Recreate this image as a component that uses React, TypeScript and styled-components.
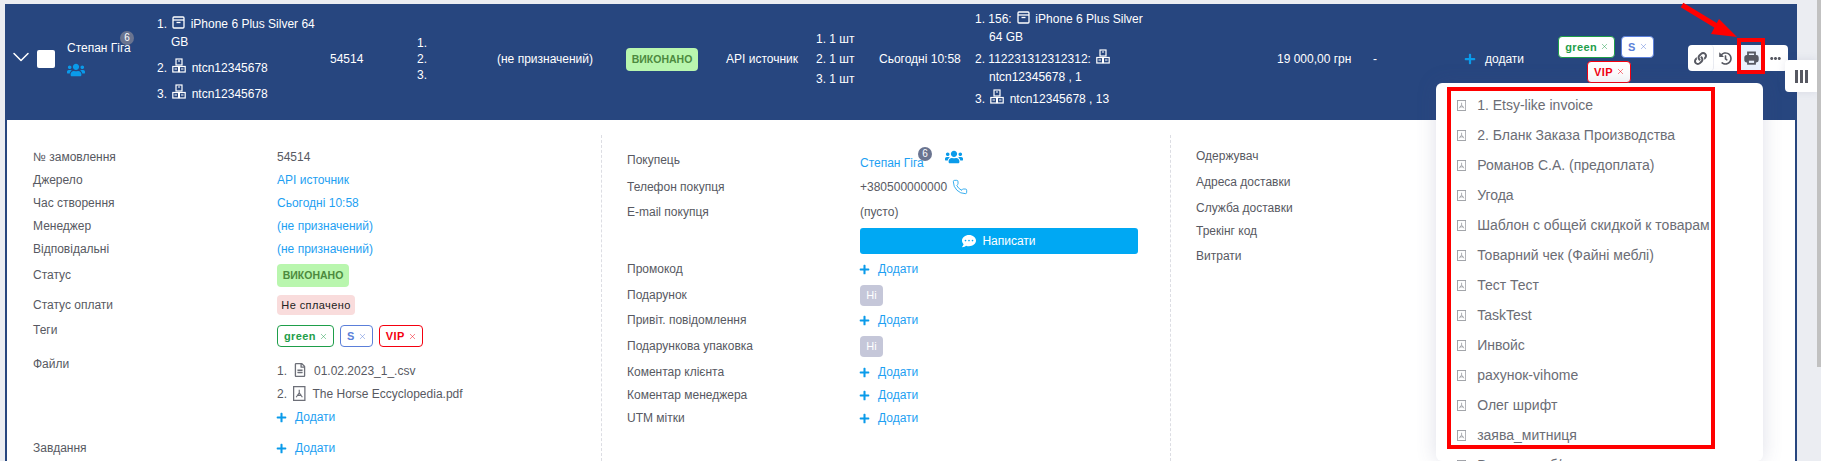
import styled, { createGlobalStyle } from 'styled-components';
import { ChevronDown, Phone, X } from 'lucide-react';
import { FaCommentDots, FaEllipsisH, FaHistory, FaLink, FaPlus, FaRegFileAlt, FaUsers } from 'react-icons/fa';

const GlobalStyle = createGlobalStyle`
  html, body {
    margin: 0;
    height: 461px;
    overflow: hidden;
    background: #ebedf2;
    font-family: 'Liberation Sans', Arial, sans-serif;
    font-size: 12px;
    color: #575962;
  }
  * { box-sizing: border-box; }
`;

const PdfIcon = ({ size = 11 }: { size?: number }) => (
  <svg width={(size * 10) / 12} height={size} viewBox="0 0 10 12" fill="none" stroke="currentColor">
    <rect x="0.5" y="0.5" width="9" height="11" strokeWidth="1" />
    <path d="M5 3 L5 5.5 L2.5 9 M5 5.5 L7.5 9 M3 7.5 H7" strokeWidth="0.9" />
  </svg>
);

const BoxIcon = () => (
  <svg width="13" height="13" viewBox="0 0 13 13" fill="none" stroke="currentColor" strokeWidth="1.3">
    <rect x="1" y="1" width="11" height="11" rx="1" />
    <path d="M1 4 H12" />
    <path d="M4.5 6.5 H8.5" />
  </svg>
);

const BoxesIcon = () => (
  <svg width="14" height="15" viewBox="0 0 14 15" fill="none" stroke="currentColor" strokeWidth="1.2">
    <rect x="4" y="1" width="6" height="6" />
    <rect x="0.8" y="8.5" width="5.8" height="5.5" />
    <rect x="7.4" y="8.5" width="5.8" height="5.5" />
    <path d="M6 3 H8 M2.5 11 H5 M9 11 H11.5" />
  </svg>
);

const PrintIcon = () => (
  <svg width="15" height="14" viewBox="0 0 15 14" fill="none" stroke="currentColor" strokeWidth="1.8">
    <path d="M4 5 V1.5 H11 V5" />
    <rect x="1.2" y="5" width="12.6" height="5.5" rx="1.5" fill="currentColor" />
    <rect x="4" y="8.8" width="7" height="4" fill="#ebf2fd" />
  </svg>
);

const Tag = ({ color, children }: { color: string; children: string }) => (
  <TagPill $color={color}>
    {children}
    <X size={9} strokeWidth={1.3} />
  </TagPill>
);

const AddLink = () => (
  <AddRow>
    <FaPlus size={11} />
    <span>Додати</span>
  </AddRow>
);

const printForms = [
  '1. Etsy-like invoice',
  '2. Бланк Заказа Производства',
  'Романов С.А. (предоплата)',
  'Угода',
  'Шаблон с общей скидкой к товарам',
  'Товарний чек (Файні меблі)',
  'Тест Тест',
  'TaskTest',
  'Инвойс',
  'рахунок-vihome',
  'Олег шрифт',
  'заява_митниця',
  'Видаткова б/н',
];

export default function App() {
  return (
    <>
      <GlobalStyle />
      <Page>
        <Card>
          <Header>
            <Cell $w={30}>
              <ChevronDown size={28} color="#fff" strokeWidth={1.3} />
            </Cell>
            <Cell $w={30}>
              <Checkbox />
            </Cell>
            <Cell $w={90}>
              <Customer>
                <CustomerName>
                  Степан Гіга
                  <CountBadge $top={-9} $left={53}>6</CountBadge>
                </CustomerName>
                <FaUsers size={18} color="#0a9bea" />
              </Customer>
            </Cell>
            <Cell $w={173}>
              <Numbered $gap={8}>
                <li>
                  1. <BoxIcon /> iPhone 6 Plus Silver 64
                  <Hanging>GB</Hanging>
                </li>
                <li>
                  2. <BoxesIcon /> ntcn12345678
                </li>
                <li>
                  3. <BoxesIcon /> ntcn12345678
                </li>
              </Numbered>
            </Cell>
            <Cell $w={87}>54514</Cell>
            <Cell $w={80}>
              <Numbered $gap={0}>
                <li>1.</li>
                <li>2.</li>
                <li>3.</li>
              </Numbered>
            </Cell>
            <Cell $w={129}>(не призначений)</Cell>
            <Cell $w={100}>
              <StatusBadge>ВИКОНАНО</StatusBadge>
            </Cell>
            <Cell $w={90}>API источник</Cell>
            <Cell $w={63}>
              <Numbered $gap={4}>
                <li>1. 1 шт</li>
                <li>2. 1 шт</li>
                <li>3. 1 шт</li>
              </Numbered>
            </Cell>
            <Cell $w={96}>Сьогодні 10:58</Cell>
            <Cell $w={302}>
              <Numbered $gap={4}>
                <li>
                  1. 156: <BoxIcon /> iPhone 6 Plus Silver
                  <Hanging>64 GB</Hanging>
                </li>
                <li>
                  2. 112231312312312: <BoxesIcon />
                  <Hanging>ntcn12345678 , 1</Hanging>
                </li>
                <li>
                  3. <BoxesIcon /> ntcn12345678 , 13
                </li>
              </Numbered>
            </Cell>
            <Cell $w={96}>19 000,00 грн</Cell>
            <Cell $w={91}>-</Cell>
            <Cell $w={95}>
              <HeaderAdd>
                <FaPlus size={12} color="#0a9bea" />
                <span>додати</span>
              </HeaderAdd>
            </Cell>
            <Cell $w={129}>
              <TagWrap>
                <Tag color="#1e9e4a">green</Tag>
                <Tag color="#5b7fd9">S</Tag>
                <Tag color="#f4000f">VIP</Tag>
              </TagWrap>
            </Cell>
            <Actions>
              <ActionButton>
                <FaLink size={13} />
              </ActionButton>
              <ActionButton>
                <FaHistory size={13} />
              </ActionButton>
              <ActionButton $active>
                <PrintIcon />
                <PrintMark />
              </ActionButton>
              <ActionButton $plain>
                <FaEllipsisH size={11} />
              </ActionButton>
            </Actions>
          </Header>

          <Details>
            <Column>
              <Row $h={23} $label={244}><Label>№ замовлення</Label><span>54514</span></Row>
              <Row $h={23} $label={244}><Label>Джерело</Label><Linked>API источник</Linked></Row>
              <Row $h={23} $label={244}><Label>Час створення</Label><Linked>Сьогодні 10:58</Linked></Row>
              <Row $h={23} $label={244}><Label>Менеджер</Label><Linked>(не призначений)</Linked></Row>
              <Row $h={23} $label={244}><Label>Відповідальні</Label><Linked>(не призначений)</Linked></Row>
              <Row $h={30} $label={244}><Label>Статус</Label><div><StatusBadge>ВИКОНАНО</StatusBadge></div></Row>
              <Row $h={30} $label={244}><Label>Статус оплати</Label><div><PaymentBadge>Не сплачено</PaymentBadge></div></Row>
              <Row $h={34} $label={244} $start>
                <Label>Теги</Label>
                <DetailTags>
                  <Tag color="#1e9e4a">green</Tag>
                  <Tag color="#5b7fd9">S</Tag>
                  <Tag color="#f4000f">VIP</Tag>
                </DetailTags>
              </Row>
              <Row $h={75} $label={244} $start>
                <Label>Файли</Label>
                <Files>
                  <FileLine><span>1.</span><FaRegFileAlt size={14} color="#6d6f78" /><span>01.02.2023_1_.csv</span></FileLine>
                  <FileLine><span>2.</span><PdfIcon size={15} /><span>The Horse Eccyclopedia.pdf</span></FileLine>
                  <AddLink />
                </Files>
              </Row>
              <Row $h={24} $label={244} $mt={7}><Label>Завдання</Label><AddLink /></Row>
            </Column>

            <Column $divided>
              <Row $h={29} $label={233}>
                <Label>Покупець</Label>
                <BuyerLine>
                  <BuyerName>
                    Степан Гіга
                    <CountBadge $top={-9} $left={58}>6</CountBadge>
                  </BuyerName>
                  <FaUsers size={18} color="#0a9bea" />
                </BuyerLine>
              </Row>
              <Row $h={26} $label={233}>
                <Label>Телефон покупця</Label>
                <PhoneLine>+380500000000 <Phone size={16} strokeWidth={1.2} color="#0a9bea" /></PhoneLine>
              </Row>
              <Row $h={24} $label={233}><Label>E-mail покупця</Label><span>(пусто)</span></Row>
              <Row $h={34} $label={233}>
                <span />
                <WriteButton><FaCommentDots size={14} />Написати</WriteButton>
              </Row>
              <Row $h={22} $label={233}><Label>Промокод</Label><AddLink /></Row>
              <Row $h={30} $label={233}><Label>Подарунок</Label><div><NoBadge>Ні</NoBadge></div></Row>
              <Row $h={20} $label={233}><Label>Привіт. повідомлення</Label><AddLink /></Row>
              <Row $h={32} $label={233}><Label>Подарункова упаковка</Label><div><NoBadge>Ні</NoBadge></div></Row>
              <Row $h={20} $label={233}><Label>Коментар клієнта</Label><AddLink /></Row>
              <Row $h={26} $label={233}><Label>Коментар менеджера</Label><AddLink /></Row>
              <Row $h={20} $label={233}><Label>UTM мітки</Label><AddLink /></Row>
            </Column>

            <Column $divided>
              <Row $h={22} $label={233}><Label>Одержувач</Label></Row>
              <Row $h={30} $label={233}><Label>Адреса доставки</Label></Row>
              <Row $h={22} $label={233}><Label>Служба доставки</Label></Row>
              <Row $h={24} $label={233}><Label>Трекінг код</Label></Row>
              <Row $h={26} $label={233}><Label>Витрати</Label></Row>
            </Column>
          </Details>

          <PrintMenu>
            {printForms.map((form) => (
              <MenuItem key={form}>
                <PdfIcon />
                <span>{form}</span>
              </MenuItem>
            ))}
            <MenuHighlight />
          </PrintMenu>
        </Card>

        <ColumnsButton>
          <i /><i /><i />
        </ColumnsButton>
        <Arrow width="70" height="50" viewBox="0 0 70 50">
          <path d="M2 3 L40 26" stroke="#f00" strokeWidth="5" />
          <polygon points="57,35 31,32 39,17" fill="#f00" />
        </Arrow>
        <Scrollbar />
      </Page>
    </>
  );
}

const Page = styled.div`
  position: relative;
  height: 461px;
  padding: 4px 0 0 5px;
  overflow: hidden;
`;

const Card = styled.div`
  position: relative;
  width: 1792px;
  height: 457px;
  background: #fff;
  border: solid #27467f;
  border-width: 0 2px;
`;

const Header = styled.div`
  display: flex;
  align-items: center;
  height: 116px;
  padding-bottom: 6px;
  background: #27467f;
  color: #fff;
  line-height: 16px;
`;

const Cell = styled.div<{ $w: number }>`
  flex: none;
  width: ${(p) => p.$w}px;
`;

const Checkbox = styled.div`
  width: 18px;
  height: 18px;
  background: #fff;
  border-radius: 2px;
`;

const Customer = styled.div`
  display: flex;
  flex-direction: column;
  align-items: flex-start;
  gap: 5px;
`;

const CustomerName = styled.span`
  position: relative;
  white-space: nowrap;
`;

const CountBadge = styled.b<{ $top: number; $left: number }>`
  position: absolute;
  top: ${(p) => p.$top}px;
  left: ${(p) => p.$left}px;
  width: 14px;
  height: 14px;
  border-radius: 50%;
  background: #6a7490;
  color: #fff;
  font-size: 10px;
  font-weight: 400;
  line-height: 14px;
  text-align: center;
`;

const Numbered = styled.ul<{ $gap: number }>`
  display: flex;
  flex-direction: column;
  gap: ${(p) => p.$gap}px;
  margin: 0;
  padding: 0;
  list-style: none;
  white-space: nowrap;
  svg {
    vertical-align: -1px;
    margin: 0 2px;
  }
`;

const Hanging = styled.span`
  display: block;
  padding-left: 14px;
  margin-top: 2px;
`;

const StatusBadge = styled.span`
  display: inline-flex;
  align-items: center;
  justify-content: center;
  width: 72px;
  height: 23px;
  border-radius: 4px;
  background: #b9f6ae;
  color: #4d8a3e;
  font-size: 10.5px;
  font-weight: 700;
`;

const PaymentBadge = styled.span`
  display: inline-flex;
  align-items: center;
  justify-content: center;
  width: 78px;
  height: 20px;
  border-radius: 4px;
  background: #f9dcdc;
  color: #222;
  font-size: 11px;
  letter-spacing: 0.4px;
`;

const NoBadge = styled.span`
  display: inline-flex;
  align-items: center;
  justify-content: center;
  width: 23px;
  height: 21px;
  border-radius: 4px;
  background: #c5c7d9;
  color: #fff;
  font-size: 11px;
`;

const TagWrap = styled.div`
  display: flex;
  flex-wrap: wrap;
  justify-content: center;
  gap: 3px 6px;
  width: 100px;
  margin-left: -3px;
  > :last-child {
    margin-left: 6px;
  }
`;

const DetailTags = styled.div`
  display: flex;
  gap: 6px;
  padding-top: 5px;
`;

const TagPill = styled.span<{ $color: string }>`
  display: inline-flex;
  align-items: center;
  gap: 3px;
  height: 22px;
  padding: 0 5px 0 6px;
  border: 1px solid ${(p) => p.$color};
  border-radius: 4px;
  background: #fff;
  color: ${(p) => p.$color};
  font-size: 11px;
  font-weight: 700;
  letter-spacing: 0.4px;
`;

const HeaderAdd = styled.div`
  display: flex;
  align-items: center;
  gap: 9px;
`;

const Actions = styled.div`
  display: flex;
  flex: none;
  width: 100px;
  height: 26px;
  margin-top: -2px;
  border-radius: 4px;
  background: #fff;
  color: #575962;
`;

const ActionButton = styled.div<{ $active?: boolean; $plain?: boolean }>`
  position: relative;
  display: flex;
  align-items: center;
  justify-content: center;
  flex: 1;
  border-radius: 4px;
  background: ${(p) => (p.$active ? '#ebf2fd' : 'transparent')};
  border-right: ${(p) => (p.$plain || p.$active ? 'none' : '1px solid #e9ebf1')};
`;

const PrintMark = styled.span`
  position: absolute;
  inset: -7px -1px -3px -2px;
  border: 4px solid #f00;
`;

const Details = styled.div`
  display: grid;
  grid-template-columns: 594px 569px 1fr;
  height: 341px;
  padding-top: 25px;
`;

const Column = styled.div<{ $divided?: boolean }>`
  padding-left: ${(p) => (p.$divided ? 25 : 26)}px;
  border-left: ${(p) => (p.$divided ? '1px dashed #dcdde3' : 'none')};
  margin-top: ${(p) => (p.$divided ? '-10px' : '0')};
  padding-top: ${(p) => (p.$divided ? '10px' : '0')};
`;

const Row = styled.div<{ $h: number; $label: number; $start?: boolean; $mt?: number }>`
  display: grid;
  grid-template-columns: ${(p) => p.$label}px 278px;
  align-items: ${(p) => (p.$start ? 'start' : 'center')};
  height: ${(p) => p.$h}px;
  margin-top: ${(p) => p.$mt ?? 0}px;
  line-height: ${(p) => (p.$start ? '20px' : 'normal')};
`;

const Label = styled.span`
  color: #575962;
`;

const Linked = styled.span`
  color: #1e9ff2;
`;

const AddRow = styled.div`
  display: flex;
  align-items: center;
  gap: 8px;
  margin-left: -1px;
  color: #1e9ff2;
  svg {
    color: #0a9bea;
  }
`;

const Files = styled.div`
  padding-top: 6px;
  line-height: 23px;
`;

const FileLine = styled.div`
  display: flex;
  align-items: center;
  height: 23px;
  span:first-child {
    width: 16px;
  }
  svg {
    margin: 0 7px 3px 0;
    color: #6d6f78;
  }
`;

const BuyerLine = styled.div`
  display: flex;
  align-items: flex-start;
  gap: 21px;
  svg {
    margin-top: -2px;
  }
`;

const BuyerName = styled.span`
  position: relative;
  margin-top: 6px;
  color: #1e9ff2;
  white-space: nowrap;
`;

const PhoneLine = styled.div`
  display: flex;
  align-items: center;
  gap: 5px;
`;

const WriteButton = styled.div`
  display: flex;
  align-items: center;
  justify-content: center;
  gap: 6px;
  height: 26px;
  border-radius: 3px;
  background: #00a8f3;
  color: #fff;
`;

const PrintMenu = styled.div`
  position: absolute;
  top: 79px;
  left: 1429px;
  width: 327px;
  height: 378px;
  padding-top: 7px;
  border-radius: 6px;
  background: #fff;
  box-shadow: 0 0 20px rgba(70, 80, 130, 0.18);
  overflow: hidden;
`;

const MenuItem = styled.div`
  display: flex;
  align-items: center;
  gap: 11px;
  height: 30px;
  padding-left: 21px;
  color: #6b6d75;
  font-size: 14px;
  white-space: nowrap;
  svg {
    color: #9b9da3;
  }
`;

const MenuHighlight = styled.div`
  position: absolute;
  top: 4px;
  left: 11px;
  width: 268px;
  height: 362px;
  border: 4px solid #f00;
`;

const ColumnsButton = styled.div`
  position: absolute;
  top: 60px;
  left: 1785px;
  display: flex;
  align-items: center;
  justify-content: center;
  gap: 2px;
  width: 32px;
  height: 32px;
  border-radius: 4px 0 0 4px;
  background: #fff;
  box-shadow: 0 0 8px rgba(70, 80, 130, 0.12);
  i {
    width: 3px;
    height: 13px;
    background: #575962;
  }
`;

const Arrow = styled.svg`
  position: absolute;
  top: 2px;
  left: 1680px;
`;

const Scrollbar = styled.div`
  position: absolute;
  top: 0;
  right: 0;
  width: 4px;
  height: 367px;
  background: #c1c1c1;
`;
